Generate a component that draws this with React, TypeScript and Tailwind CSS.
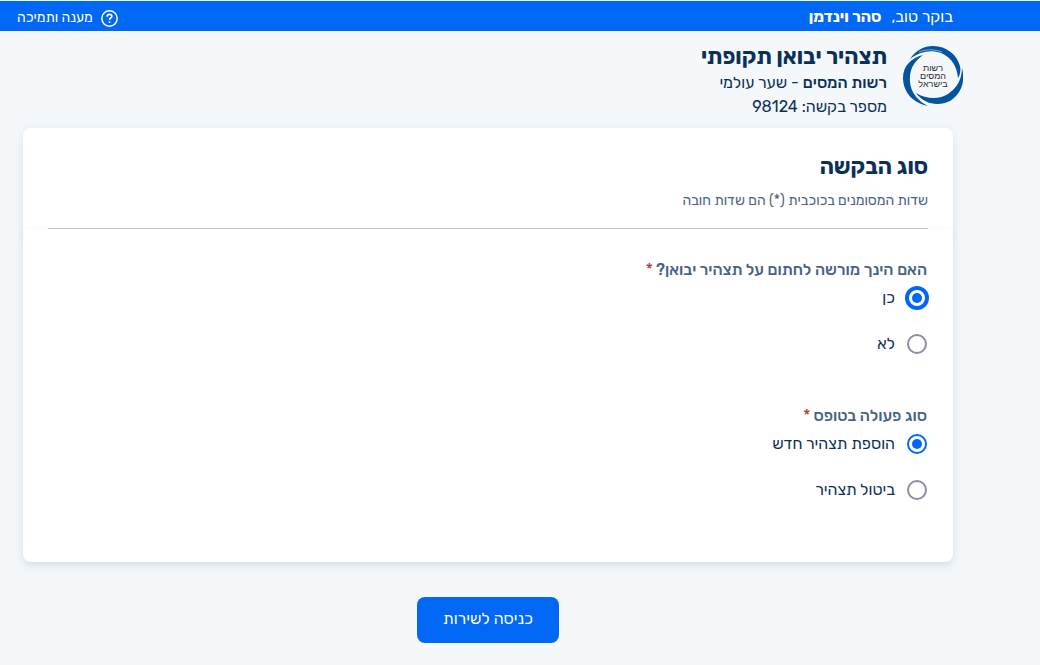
import React, { useState } from 'react';

const FONT = "font-['Rubik','Open_Sans','Liberation_Sans',sans-serif]";

type Option = { value: string; label: string };

type RadioQuestionProps = {
    name: string;
    label: string;
    options: Option[];
    value: string;
    onChange: (value: string) => void;
    focused?: boolean;
};

const TaxAuthorityLogo: React.FC = () => (
    <svg className="size-[60px] shrink-0" viewBox="0 0 60 60" role="img" aria-label="רשות המסים בישראל">
        <g fill="#03549f">
            <path d="M7 13C13 4 21 0 30 0C44 0 54 9 57 20C58 25 57 29 55 32C54 20 48 11 38 7C27 3 16 6 7 13Z" />
            <path d="M20 9C10 16 6 25 7 36C8 47 15 55 25 60C10 57 0 46 0 32C0 20 8 12 20 9Z" />
            <path d="M59 22C63 37 57 49 47 55C35 61 21 58 13 47C23 53 36 54 45 48C54 42 59 33 59 22Z" />
        </g>
        <path d="M16 6C23 3 31 3 39 6" fill="none" stroke="#f4f8fb" strokeWidth="0.5" />
        <g fill="#2b2b2b" fontSize="9" fontWeight="300" textAnchor="middle" fontFamily="Liberation Sans, sans-serif">
            <text x="30" y="25">רשות</text>
            <text x="30" y="33">המסים</text>
            <text x="30" y="41">בישראל</text>
        </g>
    </svg>
);

const HelpIcon: React.FC = () => (
    <svg className="size-[17px]" viewBox="0 0 16 16" fill="none" stroke="currentColor" aria-hidden="true">
        <circle cx="8" cy="8" r="7.2" strokeWidth="1.4" />
        <path d="M5.8 6.3C5.8 4.9 6.7 4.1 8 4.1C9.3 4.1 10.2 4.9 10.2 6C10.2 7.5 8 7.6 8 9.4" strokeWidth="1.5" />
        <path d="M8 10.6V12.2" strokeWidth="1.6" />
    </svg>
);

const RadioQuestion: React.FC<RadioQuestionProps> = ({ name, label, options, value, onChange, focused }) => (
    <fieldset>
        <legend className="text-base leading-5 font-medium text-[#476283]">
            {label}
            <span className="ms-[3px] font-normal text-[#b93a32]">*</span>
        </legend>
        <div className="mt-2 flex flex-col gap-[26px]">
            {options.map((option) => (
                <label key={option.value} className="flex items-center gap-3 self-start text-base leading-5 text-[#0b3058]">
                    <input
                        type="radio"
                        name={name}
                        value={option.value}
                        checked={value === option.value}
                        onChange={() => onChange(option.value)}
                        className={`flex size-5 appearance-none items-center justify-center rounded-full border-2 border-[#8e8ba8] bg-white before:size-[10px] before:rounded-full checked:border-[#0068f5] checked:before:bg-[#0068f5] ${
                            focused && value === option.value ? 'ring-2 ring-[#0068f5]' : ''
                        }`}
                    />
                    {option.label}
                </label>
            ))}
        </div>
    </fieldset>
);

const App: React.FC = () => {
    const [authorized, setAuthorized] = useState('yes');
    const [action, setAction] = useState('new');

    return (
        <div dir="rtl" className={`min-h-screen bg-[#f4f8fb] pt-px text-[#0b3058] ${FONT}`}>
            <header className="flex h-[30px] items-center justify-between bg-[#0068f5] ps-[87px] pe-[17px] pt-[2px] text-white">
                <p className="text-base">
                    בוקר טוב, <strong className="ms-[6px] font-bold">סהר וינדמן</strong>
                </p>
                <a href="#support" className="flex items-center gap-2 pt-[2px] text-sm">
                    <HelpIcon />
                    מענה ותמיכה
                </a>
            </header>

            <div className="flex items-start gap-4 ps-[77px] pt-[15px]">
                <TaxAuthorityLogo />
                <div className="-mt-[3px]">
                    <h1 className="text-[22px] leading-7 font-bold">תצהיר יבואן תקופתי</h1>
                    <p className="text-base leading-6">
                        <strong className="font-medium">רשות המסים</strong> - שער עולמי
                    </p>
                    <p className="text-base leading-6">מספר בקשה: 98124</p>
                </div>
            </div>

            <main className="ps-[87px] pe-[23px] pt-[9px] pb-5">
                <section className="rounded-lg bg-white px-[25px] pt-[23px] pb-3 shadow-[0_2px_8px_rgba(11,48,88,0.12)]">
                    <div className="border-b border-[#bccbe3] pb-[17px]">
                        <h2 className="text-[22px] leading-8 font-bold">סוג הבקשה</h2>
                        <p className="mt-2 text-sm leading-5 text-[#476283]">שדות המסומנים בכוכבית (*) הם שדות חובה</p>
                    </div>
                </section>
                <section className="-mt-3 flex flex-col gap-[52px] rounded-lg bg-white px-[26px] pt-[31px] pb-[62px] shadow-[0_4px_8px_rgba(11,48,88,0.12)]">
                    <RadioQuestion
                        name="authorized"
                        label="האם הינך מורשה לחתום על תצהיר יבואן?"
                        options={[
                            { value: 'yes', label: 'כן' },
                            { value: 'no', label: 'לא' },
                        ]}
                        value={authorized}
                        onChange={setAuthorized}
                        focused
                    />
                    <RadioQuestion
                        name="action"
                        label="סוג פעולה בטופס"
                        options={[
                            { value: 'new', label: 'הוספת תצהיר חדש' },
                            { value: 'cancel', label: 'ביטול תצהיר' },
                        ]}
                        value={action}
                        onChange={setAction}
                    />
                </section>
                <div className="mt-[35px] flex justify-center">
                    <button type="button" className="h-[46px] rounded-lg bg-[#0068f5] px-[26px] pb-[2px] text-base text-white">
                        כניסה לשירות
                    </button>
                </div>
            </main>
        </div>
    );
};

export default App;
